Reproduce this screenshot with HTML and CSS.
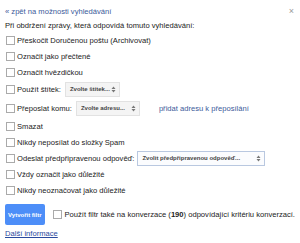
FILE: index.html
```html
<!DOCTYPE html>
<html lang="cs">
<head>
<meta charset="utf-8">
<link rel="stylesheet" href="styles.css">
</head>
<body>
<div class="panel">
  <div class="top">
    <a class="back">« zpět na možnosti vyhledávání</a>
    <span class="close">×</span>
  </div>
  <div class="lead">Při obdržení zprávy, která odpovídá tomuto vyhledávání:</div>
  <div class="row"><span class="cb"></span>Přeskočit Doručenou poštu (Archivovat)</div>
  <div class="row"><span class="cb"></span>Označit jako přečtené</div>
  <div class="row"><span class="cb"></span>Označit hvězdičkou</div>
  <div class="row tall"><span class="cb"></span>Použít štítek:<span class="sel sel-label">Zvolte štítek...<svg class="arr" width="5" height="7" viewBox="0 0 5 7"><path d="M0.5 3 L2.5 0.5 L4.5 3Z M0.5 4 L2.5 6.5 L4.5 4Z" fill="#777"/></svg></span></div>
  <div class="row tall2"><span class="cb"></span>Přeposlat komu:<span class="sel sel-addr">Zvolte adresu...<svg class="arr" width="5" height="7" viewBox="0 0 5 7"><path d="M0.5 3 L2.5 0.5 L4.5 3Z M0.5 4 L2.5 6.5 L4.5 4Z" fill="#777"/></svg></span><a class="add">přidat adresu k přeposílání</a></div>
  <div class="row"><span class="cb"></span>Smazat</div>
  <div class="row"><span class="cb"></span>Nikdy neposílat do složky Spam</div>
  <div class="row"><span class="cb"></span>Odeslat předpřipravenou odpověď:<span class="sel sel-reply">Zvolit předpřipravenou odpověď...<svg class="arr" width="5" height="7" viewBox="0 0 5 7"><path d="M0.5 3 L2.5 0.5 L4.5 3Z M0.5 4 L2.5 6.5 L4.5 4Z" fill="#777"/></svg></span></div>
  <div class="row"><span class="cb"></span>Vždy označit jako důležité</div>
  <div class="row"><span class="cb"></span>Nikdy neoznačovat jako důležité</div>
  <div class="actions">
    <span class="btn">Vytvořit filtr</span>
    <span class="cb cb-apply"></span><span class="apply">Použít filtr také na konverzace (<b>190</b>) odpovídající kritériu konverzací.</span>
  </div>
  <a class="more">Další informace</a>
</div>
</body>
</html>
```

FILE: styles.css
```css
html, body {
  margin: 0;
  padding: 0;
  background: #fff;
}
body {
  font-family: "Liberation Sans", Arial, sans-serif;
  font-size: 7.6px;
  color: #222;
}
.panel {
  width: 300px;
  height: 243px;
  padding: 4px 5px 0 5px;
  box-sizing: border-box;
  display: flex;
  flex-direction: column;
}
.top {
  height: 14px;
  display: flex;
  align-items: center;
  justify-content: space-between;
}
.back {
  color: #3b5a9a;
}
.close {
  color: #999;
  font-size: 9px;
  margin-right: 1px;
}
.lead {
  height: 14px;
  display: flex;
  align-items: center;
}
.row {
  height: 16px;
  display: flex;
  align-items: center;
  white-space: nowrap;
}
.row.tall {
  height: 18px;
}
.row.tall2 {
  height: 20px;
}
.cb {
  width: 9px;
  height: 9px;
  box-sizing: border-box;
  border: 1px solid #aaa;
  background: #fff;
  margin: 0 2px 0 1px;
  flex: none;
}
.sel {
  display: inline-flex;
  align-items: center;
  justify-content: space-between;
  height: 15px;
  box-sizing: border-box;
  padding: 0 3px 0 4px;
  border: 1px solid #e2e2e2;
  background: #f4f4f4;
  font-size: 6px;
  font-weight: bold;
  color: #444;
  margin-left: 4px;
}
.sel-label {
  width: 55px;
}
.sel-addr {
  width: 64px;
}
.sel-reply {
  width: 128px;
  background: #fbfcfe;
  border-color: #b9c8e0;
  margin-left: 3px;
}
.arr {
  flex: none;
}
.add {
  color: #3b5a9a;
  margin-left: 19px;
}
.actions {
  margin-top: 6px;
  height: 21px;
  display: flex;
  align-items: center;
}
.btn {
  width: 48px;
  height: 21px;
  background: #4d8ef8;
  color: #fff;
  font-weight: bold;
  font-size: 6px;
  display: flex;
  align-items: center;
  justify-content: center;
  border-radius: 2px;
}
.cb-apply {
  margin-left: 8px;
  margin-right: 3px;
}
.apply {
  white-space: nowrap;
}
.more {
  margin-top: 3px;
  color: #2a4a9e;
  text-decoration: underline;
  height: 12px;
  line-height: 12px;
  align-self: flex-start;
}
```
